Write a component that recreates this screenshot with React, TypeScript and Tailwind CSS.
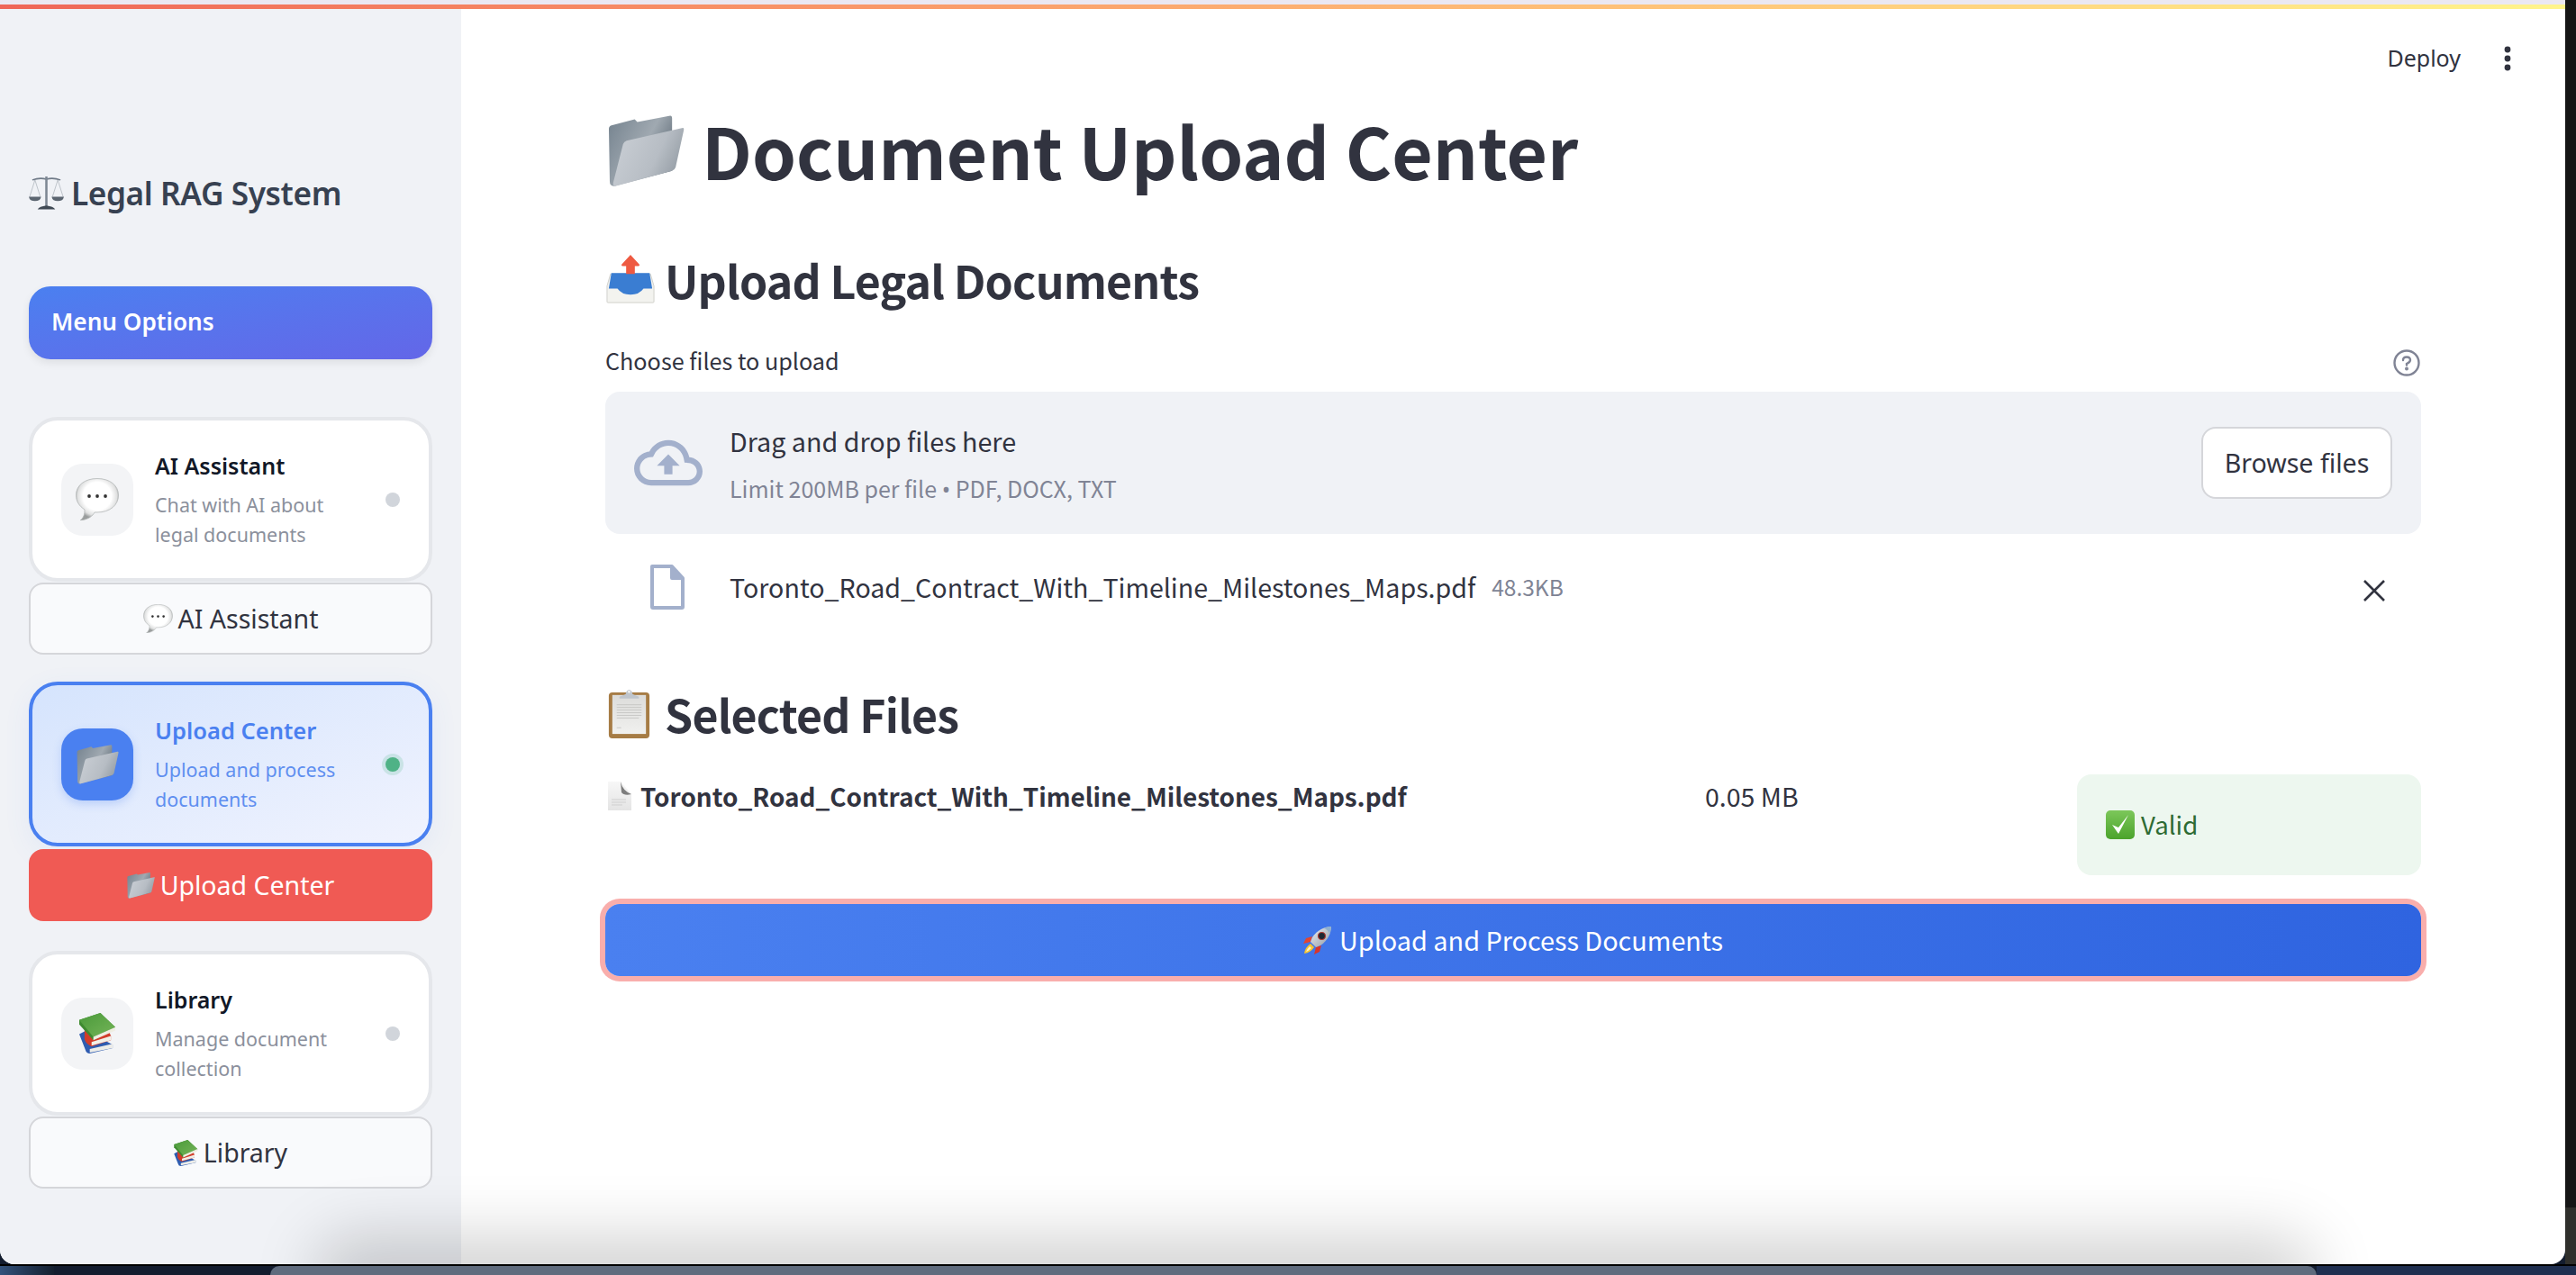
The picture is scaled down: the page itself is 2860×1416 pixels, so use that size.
import React from 'react';

// Emoji are drawn by hand since the sandbox has no colour emoji font
function FolderEmoji({ className }: { className: string }) {
  return (
    <svg viewBox="0 0 86 80" className={className}>
      <defs>
        <linearGradient id="folderBack" x1="0" y1="0" x2="1" y2="0.6">
          <stop offset="0" stopColor="#74828e" />
          <stop offset="0.6" stopColor="#a0a9b1" />
          <stop offset="1" stopColor="#5d6a75" />
        </linearGradient>
        <linearGradient id="folderFront" x1="0" y1="0" x2="1" y2="0.4">
          <stop offset="0" stopColor="#ccd1d7" />
          <stop offset="0.7" stopColor="#b7bdc4" />
          <stop offset="1" stopColor="#9aa2aa" />
        </linearGradient>
      </defs>
      <path d="M1 15 Q1 12 4 11 L30 4 L33 7 L70 0 Q72 0 72 3 L72 62 L8 79 Q2 80 2 74 Z" fill="url(#folderBack)" />
      <path d="M17 32 Q18 29 21 28 L83 14 Q86 13 85 17 L76 58 Q75 61 72 62 L9 79 Q5 80 6 75 Z" fill="url(#folderFront)" />
    </svg>
  );
}

function OutboxEmoji({ className }: { className: string }) {
  return (
    <svg viewBox="0 0 56 56" className={className}>
      <path d="M5 22 H51 L55 36 V54 Q55 55 54 55 H2 Q1 55 1 54 V36 Z" fill="#f3f3ef" stroke="#cfcfca" strokeWidth="1" />
      <path d="M6 21 H50 L53 39 H43 Q38 46 28 46 Q18 46 13 39 H3 Z" fill="#3a7dd2" />
      <path d="M28 0 L38 11 Q39 13 37 13 H33 V22 H23 V13 H19 Q17 13 18 11 Z" fill="#ee5a42" />
    </svg>
  );
}

function ClipboardEmoji({ className }: { className: string }) {
  return (
    <svg viewBox="0 0 46 56" className={className}>
      <defs>
        <linearGradient id="clipPaper" x1="0" y1="0" x2="0" y2="1">
          <stop offset="0" stopColor="#dcdcda" />
          <stop offset="1" stopColor="#f1f1ef" />
        </linearGradient>
      </defs>
      <rect x="0" y="4" width="46" height="52" rx="4" fill="#a67c45" />
      <rect x="4" y="7" width="38" height="44" fill="url(#clipPaper)" />
      <path d="M9 18 H37 M9 21 H37 M9 24 H37 M9 27 H37 M9 30 H37 M9 33 H34 M9 44 H14" stroke="#c4c4c2" strokeWidth="0.9" />
      <path d="M12 9 L19 6 L20 3 Q23 -1 26 3 L27 6 L34 9 V11 H12 Z" fill="#bfc5cc" />
      <circle cx="23" cy="3.4" r="1.5" fill="#eef0f2" />
    </svg>
  );
}

function PageEmoji({ className }: { className: string }) {
  return (
    <svg viewBox="0 0 26 32" className={className}>
      <defs>
        <linearGradient id="pageBody" x1="0" y1="0" x2="0" y2="1">
          <stop offset="0" stopColor="#f7f7f7" />
          <stop offset="1" stopColor="#e4e4e4" />
        </linearGradient>
      </defs>
      <path d="M0 0 H14 L26 14 V32 H0 Z" fill="url(#pageBody)" />
      <path d="M14 0 Q16 10 26 14 Q18 16 15 12 Z" fill="#7d7d7d" />
      <path d="M4 20 H20 M4 23 H20 M4 26 H16" stroke="#cfcfcf" strokeWidth="1" />
    </svg>
  );
}

function SpeechEmoji({ className }: { className: string }) {
  return (
    <svg viewBox="0 0 48 47" className={className}>
      <defs>
        <radialGradient id="bubbleFill" cx="0.5" cy="0.42" r="0.54">
          <stop offset="0.62" stopColor="#ffffff" />
          <stop offset="0.86" stopColor="#dfe0e0" />
          <stop offset="1" stopColor="#9a9d9d" />
        </radialGradient>
      </defs>
      <path d="M24 0.5 C38 0.5 47.5 8 47.5 19 C47.5 30 38 38 24 38 L21 38 C19 42 14 46 5 47 C9 44 10 40 10 35 C4 31 0.5 26 0.5 19 C0.5 8 10 0.5 24 0.5 Z" fill="url(#bubbleFill)" stroke="#b4b7b7" strokeWidth="0.8" />
      <circle cx="15" cy="20" r="1.9" fill="#333" />
      <circle cx="24" cy="20" r="1.9" fill="#333" />
      <circle cx="33" cy="20" r="1.9" fill="#333" />
    </svg>
  );
}

function BooksEmoji({ className }: { className: string }) {
  return (
    <svg viewBox="0 0 42 46" className={className}>
      <defs>
        <linearGradient id="bookCover" x1="0" y1="0" x2="1" y2="1">
          <stop offset="0" stopColor="#4a9a3a" />
          <stop offset="1" stopColor="#74b458" />
        </linearGradient>
      </defs>
      <path d="M0 24 L8 20 L38 36 L38 40 L12 46 Q8 46 7 42 Z" fill="#2f5cb0" />
      <path d="M12 41 L38 35 L38 40 L12 45 Z" fill="#ecece8" />
      <path d="M6 18 L30 12 L36 26 L36 31 L14 38 Q8 36 6 30 Z" fill="#d23c2a" />
      <path d="M14 33 L36 26 L36 31 L14 37 Z" fill="#f2f0e8" />
      <path d="M0 8 L24 0 L41 16 L41 18 L16 31 L0 13 Z" fill="#3e8a30" />
      <path d="M0 8 L24 0 L41 16 L16 27 Z" fill="url(#bookCover)" />
      <path d="M16 27 L41 16 V20 L16 31 Z" fill="#efeee2" />
    </svg>
  );
}

function RocketEmoji({ className }: { className: string }) {
  return (
    <svg viewBox="0 0 32 32" className={className}>
      <defs>
        <linearGradient id="rocketBody" x1="0" y1="0" x2="1" y2="1">
          <stop offset="0" stopColor="#eef1f4" />
          <stop offset="1" stopColor="#8f99a5" />
        </linearGradient>
      </defs>
      <path d="M8 20 Q2 24 1 31 Q8 30 12 24 Z" fill="#f7c531" />
      <path d="M7 23 Q4 26 3 29 Q6 28 9 25 Z" fill="#fff3c4" />
      <path d="M10 12 L3 14 L0 20 L8 18 Z" fill="#e2452f" />
      <path d="M20 22 L18 29 L12 32 L14 24 Z" fill="#d8352a" />
      <path d="M31 1 C24 1 15 5 10 13 L8 18 L14 24 L19 22 C27 17 31 8 31 1 Z" fill="url(#rocketBody)" />
      <path d="M31 1 C28 1 25 2 23 3 C26 4 28 6 29 9 C30 6 31 3 31 1 Z" fill="#8fb0cf" />
      <circle cx="20.5" cy="11.5" r="4" fill="#1d2733" stroke="#b23a32" strokeWidth="1.2" />
    </svg>
  );
}

function ScalesEmoji({ className }: { className: string }) {
  return (
    <svg viewBox="0 0 40 40" className={className} fill="none">
      <path d="M4 5 Q12 2 20 4 Q28 2 36 5" stroke="#6f7a87" strokeWidth="1.6" />
      <path d="M20 1 V35" stroke="#7d8793" strokeWidth="2.6" />
      <path d="M10 38.5 Q12 35 20 34 Q28 35 30 38.5 Z" fill="#3f4954" />
      <path d="M7 5 L1 24 M7 5 L13 24 M33 5 L27 24 M33 5 L39 24" stroke="#a7aeb6" strokeWidth="0.7" />
      <path d="M0 24 H14 Q13 29 7 29 Q1 29 0 24 Z M26 24 H40 Q39 29 33 29 Q27 29 26 24 Z" fill="#5b6570" />
    </svg>
  );
}

function CheckEmoji({ className }: { className: string }) {
  return (
    <svg viewBox="0 0 32 32" className={className}>
      <defs>
        <linearGradient id="checkFill" x1="0" y1="0" x2="0" y2="1">
          <stop offset="0" stopColor="#7cc75a" />
          <stop offset="1" stopColor="#4ba32c" />
        </linearGradient>
      </defs>
      <rect width="32" height="32" rx="5" fill="url(#checkFill)" />
      <path d="M7 16 L14 26 L25 5 L14 19 Z" fill="#fff" />
    </svg>
  );
}

function NavCard({ active, icon, title, lines, dot }: { active?: boolean; icon: React.ReactNode; title: string; lines: string[]; dot?: boolean }) {
  return (
    <div
      className={
        active
          ? 'flex h-[183px] items-center rounded-[32px] border-4 border-[#4a80f0] bg-gradient-to-br from-[#d5e4fd] to-[#f0f3fe] pr-[32px] pl-8 shadow-[0_8px_30px_rgba(74,128,240,0.08)]'
          : 'flex h-[183px] items-center rounded-[32px] border-4 border-[#e5e7eb] bg-white pr-[32px] pl-8'
      }
    >
      <div
        className={
          active
            ? 'flex h-20 w-20 shrink-0 items-center justify-center rounded-3xl bg-[#4a80f0] shadow-[0_4px_10px_rgba(74,128,240,0.25)]'
            : 'flex h-20 w-20 shrink-0 items-center justify-center rounded-3xl bg-[#f3f4f6]'
        }
      >
        {icon}
      </div>
      <div className="ml-6 flex-1 font-['Noto_Sans',sans-serif]">
        <div className={active ? 'text-[25.5px] leading-[36px] font-semibold text-[#4a80f0]' : 'text-[25px] leading-[36px] font-semibold text-[#111827]'}>{title}</div>
        <div className={active ? 'mt-[9px] text-[21.5px] leading-[33px] text-[#5f8ff0]' : 'mt-[9px] text-[21.5px] leading-[33px] text-[#8b909c]'}>
          {lines.map((l) => (
            <div key={l}>{l}</div>
          ))}
        </div>
      </div>
      <div className={dot ? 'h-4 w-4 rounded-full bg-[#4fb286] shadow-[0_0_0_4px_rgba(79,178,134,0.2)]' : 'h-4 w-4 rounded-full bg-[#d1d5db]'} />
    </div>
  );
}

function NavButton({ icon, label, primary }: { icon: React.ReactNode; label: string; primary?: boolean }) {
  return (
    <div
      className={
        primary
          ? "mt-[3px] flex h-20 items-center justify-center gap-[6px] rounded-2xl bg-[#f05a54] font-['Noto_Sans',sans-serif] text-[28.5px] text-white"
          : "mt-[1px] flex h-20 items-center justify-center gap-[6px] rounded-2xl border-2 border-[#d5d6da] bg-[#f9fafc] font-['Noto_Sans',sans-serif] text-[28.5px] text-[#31333f]"
      }
    >
      {icon}
      {label}
    </div>
  );
}

export default function App() {
  return (
    <div className="relative h-[1416px] w-[2860px] overflow-hidden bg-[#131c2e]">
      {/* desktop behind the browser window */}
      <div className="absolute bottom-0 left-0 h-3 w-[60px] bg-gradient-to-r from-[#33527c] to-[#15202f]" />
      <div className="absolute bottom-0 right-0 h-3 w-[288px] bg-[#1f2f50]" />
      <div className="absolute top-[1404px] left-0 h-[2px] w-full bg-black" />
      <div className="absolute bottom-0 left-[300px] h-[10px] w-[2272px] rounded-t-[24px] bg-[#5f6b7d]" />
      <div className="absolute top-0 right-0 h-[1341px] w-3 bg-[#151515]" />
      <div className="absolute top-[1341px] right-0 h-[63px] w-3 bg-[#2f2f2b]" />

      <div className="relative flex h-[1404px] w-[2848px] overflow-hidden rounded-b-[16px] bg-white">
        {/* top decoration */}
        <div className="absolute inset-x-0 top-0 z-10 h-[5px] bg-[#ebe8f2]" />
        <div className="absolute inset-x-0 top-[5px] z-10 h-[5px] bg-gradient-to-r from-[#ef6558] to-[#fff48c]" />

        {/* shadow from the dock below the window */}
        <div className="pointer-events-none absolute bottom-[-30px] left-[380px] z-10 h-[30px] w-[2160px] rounded-full shadow-[0_0_70px_30px_rgba(0,0,0,0.18)]" />

        <aside className="flex w-[512px] shrink-0 flex-col bg-[#f0f2f6] px-8 font-['Noto_Sans',sans-serif]">
          <div className="mt-[188px] flex h-[52px] items-center gap-[8px] text-[35.2px] font-semibold text-[#374151]">
            <ScalesEmoji className="h-[39px] w-[39px]" />
            <span className="tracking-[-0.4px]">Legal RAG System</span>
          </div>
          <div className="mt-[78px] flex h-[81px] items-center rounded-3xl bg-gradient-to-br from-[#4a80f0] to-[#6366e8] pb-[2px] pl-[25px] text-[26.2px] font-semibold text-white shadow-[0_4px_10px_rgba(0,0,0,0.08)]">
            Menu Options
          </div>
          <div className="mt-16">
            <NavCard icon={<SpeechEmoji className="h-[47px] w-[48px]" />} title="AI Assistant" lines={['Chat with AI about', 'legal documents']} />
            <NavButton icon={<SpeechEmoji className="h-[32px] w-[33px]" />} label="AI Assistant" />
          </div>
          <div className="mt-[30px]">
            <NavCard active dot icon={<FolderEmoji className="h-[44px] w-[47px]" />} title="Upload Center" lines={['Upload and process', 'documents']} />
            <NavButton primary icon={<FolderEmoji className="h-[29px] w-[31px]" />} label="Upload Center" />
          </div>
          <div className="mt-[33px]">
            <NavCard icon={<BooksEmoji className="h-[45px] w-[41px]" />} title="Library" lines={['Manage document', 'collection']} />
            <NavButton icon={<BooksEmoji className="h-[29px] w-[27px]" />} label="Library" />
          </div>
        </aside>

        <main className="relative flex-1 px-[160px] font-['Noto_Sans_CJK_SC',sans-serif] text-[#31333f]">
          <div className="absolute top-[46px] right-[60px] flex items-center gap-[48px] font-['Noto_Sans',sans-serif] text-[25px]">
            <span>Deploy</span>
            <svg viewBox="0 0 8 28" className="h-[28px] w-2" fill="#31333f">
              <circle cx="4" cy="4" r="3.4" />
              <circle cx="4" cy="14" r="3.4" />
              <circle cx="4" cy="24" r="3.4" />
            </svg>
          </div>

          <div className="mt-[126px] flex h-[84px] items-center gap-[19px] text-[78.4px] leading-none font-bold">
            <FolderEmoji className="ml-[3px] h-[80px] w-[85px]" />
            <h1 className="-translate-y-[2px]">Document Upload Center</h1>
          </div>

          <div className="mt-[72px] flex h-[56px] items-center gap-[10px] text-[50px] leading-none font-semibold">
            <OutboxEmoji className="h-[54px] w-[56px]" />
            <h2 className="tracking-[-0.8px]">Upload Legal Documents</h2>
          </div>

          <div className="mt-[43px] flex h-[40px] items-center justify-between text-[25.2px]">
            <span>Choose files to upload</span>
            <svg viewBox="0 0 30 30" className="mt-1 mr-[1px] h-[30px] w-[30px]" fill="none" stroke="#808495" strokeWidth="2.4">
              <circle cx="15" cy="15" r="13.5" />
              <path d="M11 12 Q11 8.5 15 8.5 Q19 8.5 19 12 Q19 14 15 16 V17.5" strokeLinecap="round" />
              <circle cx="15" cy="21.5" r="0.8" fill="#808495" />
            </svg>
          </div>

          <div className="mt-[14px] flex h-[158px] items-center rounded-2xl bg-[#f0f2f6] pr-8 pl-8">
            <svg viewBox="0 0 24 24" className="h-[76px] w-[76px]" fill="#a3b0cc">
              <path d="M19.35 10.04C18.67 6.59 15.64 4 12 4 9.11 4 6.6 5.64 5.35 8.04 2.34 8.36 0 10.91 0 14c0 3.31 2.69 6 6 6h13c2.76 0 5-2.24 5-5 0-2.64-2.05-4.78-4.65-4.96zM19 18H6c-2.21 0-4-1.79-4-4 0-2.05 1.53-3.76 3.56-3.97l1.07-.11.5-.95C8.08 7.14 9.94 6 12 6c2.62 0 4.88 1.86 5.39 4.43l.3 1.5 1.53.11c1.56.1 2.78 1.41 2.78 2.96 0 1.65-1.35 3-3 3zM8 13h2.55v3h2.9v-3H16l-4-4z" />
            </svg>
            <div className="ml-[30px] flex-1 pt-[3px]">
              <div className="text-[28.7px] leading-[44px]">Drag and drop files here</div>
              <div className="mt-[10px] text-[25px] leading-[40px] text-[#808495]">
                Limit 200MB per file <span className="font-['Noto_Sans',sans-serif]">•</span> PDF, DOCX, TXT
              </div>
            </div>
            <div className="flex h-[80px] w-[212px] items-center justify-center rounded-2xl border-2 border-[#d5d6da] bg-white font-['Noto_Sans',sans-serif] text-[28.6px]">
              Browse files
            </div>
          </div>

          <div className="mt-[33px] flex h-[52px] items-center">
            <svg viewBox="0 0 40 50" className="ml-[49px] h-[50px] w-[40px]" fill="none" stroke="#a3b0cc" strokeWidth="4" strokeLinejoin="round">
              <path d="M3 2 H25 L37 15 V47 Q37 48 36 48 H4 Q3 48 3 47 Z" />
              <path d="M25 2 V15 H37" fill="#a3b0cc" />
            </svg>
            <span className="ml-[49px] text-[28.6px]">Toronto_Road_Contract_With_Timeline_Milestones_Maps.pdf</span>
            <span className="ml-[18px] text-[24.5px] text-[#808495]">48.3KB</span>
            <svg viewBox="0 0 24 24" className="mt-[8px] mr-[40px] ml-auto h-[24px] w-[24px]" fill="none" stroke="#31333f" strokeWidth="2.6">
              <path d="M1 1 L23 23 M23 1 L1 23" />
            </svg>
          </div>

          <div className="mt-[86px] flex h-[56px] items-center gap-[16px] text-[50px] leading-none font-semibold">
            <ClipboardEmoji className="ml-[3px] h-[55px] w-[47px]" />
            <h2 className="tracking-[-0.8px]">Selected Files</h2>
          </div>

          {/* selected file row */}
          <div className="mt-[40px] flex h-[112px] items-start">
            <div className="flex w-[1221px] items-center gap-[10px] pt-[4px] text-[27.9px] leading-[40px] font-semibold">
              <PageEmoji className="ml-[3px] h-[32px] w-[26px]" />
              <span>Toronto_Road_Contract_With_Timeline_Milestones_Maps.pdf</span>
            </div>
            <div className="w-[413px] pt-[4px] text-[28.5px] leading-[40px]">0.05 MB</div>
            <div className="flex h-[112px] flex-1 items-center gap-[7px] rounded-2xl bg-[#edf7ef] pl-8 text-[27.6px] text-[#2e6b33]">
              <CheckEmoji className="h-[32px] w-[32px]" />
              Valid
            </div>
          </div>

          <div className="mt-[32px] flex h-[80px] items-center justify-center gap-[8px] rounded-2xl bg-gradient-to-r from-[#4a80f0] to-[#2f64e0] text-[28.8px] text-white shadow-[0_0_0_6px_#f9aeac]">
            <RocketEmoji className="h-[32px] w-[32px]" />
            Upload and Process Documents
          </div>
        </main>
      </div>
    </div>
  );
}
